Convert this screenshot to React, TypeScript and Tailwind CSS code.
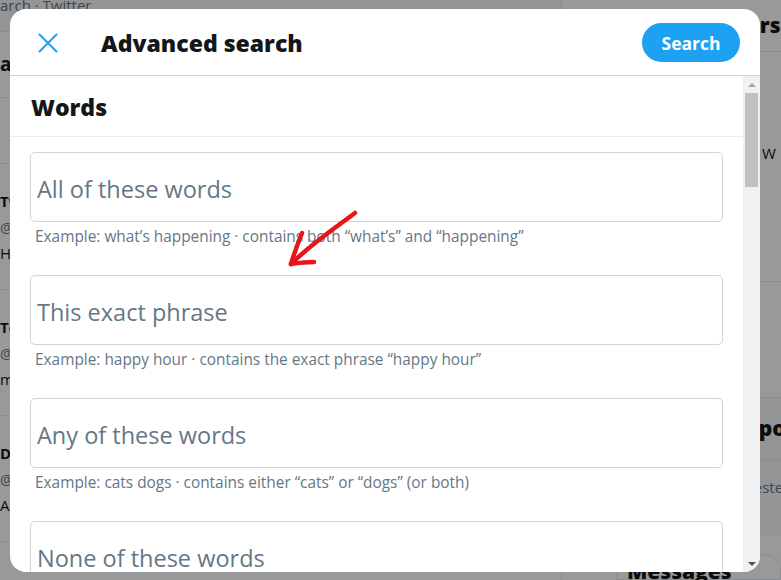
const fields = [
  {
    label: 'All of these words',
    help: 'Example: what’s happening · contains both “what’s” and “happening”',
  },
  {
    label: 'This exact phrase',
    help: 'Example: happy hour · contains the exact phrase “happy hour”',
  },
  {
    label: 'Any of these words',
    help: 'Example: cats dogs · contains either “cats” or “dogs” (or both)',
  },
  {
    label: 'None of these words',
    help: 'Example: cats dogs · does not contain “cats” and does not contain “dogs”',
  },
];

const tweets = [
  { name: 'Twitter Support', handle: '@Support · 2h', text: 'Here are some tips' },
  { name: 'Todo el mundo', handle: '@todo · 5h', text: 'me encanta 2020' },
  { name: 'Developer News', handle: '@devnews · 1d', text: 'Advanced filters' },
];

// pagina de fondo atenuada detras del modal
const BackgroundPage = () => (
  <div className="flex h-full w-full bg-white text-[#14171a]">
    <div className="w-[562px] shrink-0 border-r border-[#e6ecf0] flex flex-col">
      <div className="h-[32px] bg-[#f5f8fa] border-b border-[#e6ecf0] text-[15px] leading-[14px] text-[#657786] overflow-hidden">
        <span className="-mt-[2px] block">arch · Twitter</span>
      </div>
      <div className="h-[66px] border-b border-[#e6ecf0] flex items-center text-[19px] font-bold">
        <span>a</span>
      </div>
      <div className="h-[66px] border-b border-[#e6ecf0]" />
      {tweets.map((t) => (
        <div key={t.name} className="h-[126px] border-b border-[#e6ecf0] pt-[24px] text-[15px] leading-[26px]">
          <div className="font-bold">{t.name}</div>
          <div className="text-[#657786]">{t.handle}</div>
          <div>{t.text}</div>
        </div>
      ))}
    </div>
    <div className="flex-1 min-w-0 pl-[34px] flex flex-col whitespace-nowrap">
      <div className="h-[52px] border-b border-[#e6ecf0] flex items-center text-[21px] font-extrabold">
        <span className="ml-[40px]">Search filters</span>
      </div>
      <div className="h-[230px] border-b border-[#e6ecf0] pt-[90px] pl-[166px] text-[15px]">W</div>
      <div className="h-[116px] border-b border-[#e6ecf0]" />
      <div className="h-[62px] bg-[#f5f8fa] border-b border-[#e6ecf0] flex items-center text-[21px] font-extrabold">
        <span className="ml-[118px]">Top posts</span>
      </div>
      <div className="h-[75px] bg-[#f5f8fa] pt-[14px] pl-[124px] text-[15px] leading-[26px]">
        <div className="text-[#657786]">Suggested</div>
        <div className="font-bold">Tcon</div>
      </div>
      <div className="mt-auto ml-[20px] h-[26px] rounded-t-2xl bg-white border border-[#e6ecf0] pl-[10px] pt-[4px] text-[21px] font-extrabold leading-[24px]">
        Messages
      </div>
    </div>
  </div>
);

export default function App() {
  return (
    <div className="relative w-[781px] h-[580px] overflow-hidden font-['Open_Sans',sans-serif]">
      <BackgroundPage />
      <div className="absolute inset-0 bg-black/40" />

      <div className="absolute left-[10px] top-[9px] w-[750px] h-[563px] bg-white rounded-2xl overflow-hidden flex flex-col">
        {/* cabecera */}
        <div className="h-[67px] shrink-0 border-b border-[#ccd6dd] flex items-center pl-[28px] pr-[20px]">
          <button className="w-[20px] h-[20px] flex items-center justify-center mt-[2px]">
            <svg width="20" height="20" viewBox="0 0 20 20" fill="none" stroke="#1da1f2" strokeWidth="2" strokeLinecap="round">
              <path d="M1.5 1.5 L18.5 18.5" />
              <path d="M18.5 1.5 L1.5 18.5" />
            </svg>
          </button>
          <h1 className="ml-[43px] mt-[2px] text-[23px] font-extrabold text-[#14171a]">Advanced search</h1>
          <button className="ml-auto h-[39px] w-[98px] rounded-full bg-[#1da1f2] text-white text-[17.5px] font-bold pt-[2px]">
            Search
          </button>
        </div>

        <div className="flex flex-1 min-h-0">
          <div className="flex-1 overflow-hidden">
            <div className="h-[61px] border-b border-[#e6ecf0] flex items-center px-[21px]">
              <h2 className="mt-[2px] text-[23px] font-extrabold text-[#14171a]">Words</h2>
            </div>
            <div className="px-[20px] pt-[15px]">
              {fields.map((f) => (
                <div key={f.label} className="mb-[28px]">
                  <input
                    placeholder={f.label}
                    className="w-full h-[70px] border border-[#ccd6dd] rounded-[5px] pl-[6px] pt-[3px] text-[23.5px] outline-none placeholder:text-[#657786]"
                  />
                  <p className="pt-[5px] pl-[5px] text-[15.4px] leading-[20px] text-[#657786] whitespace-nowrap">{f.help}</p>
                </div>
              ))}
            </div>
          </div>

          {/* barra de desplazamiento */}
          <div className="w-[17px] shrink-0 bg-[#f1f1f1] flex flex-col items-center">
            <div className="h-[17px] flex items-center justify-center">
              <div className="w-0 h-0 border-l-[4px] border-r-[4px] border-b-[4px] border-l-transparent border-r-transparent border-b-[#a3a3a3]" />
            </div>
            <div className="w-[13px] h-[94px] bg-[#c1c1c1]" />
            <div className="mt-auto h-[17px] flex items-center justify-center">
              <div className="w-0 h-0 border-l-[4px] border-r-[4px] border-t-[4px] border-l-transparent border-r-transparent border-t-[#505050]" />
            </div>
          </div>
        </div>
      </div>

      {/* flecha roja de anotacion */}
      <svg className="absolute inset-0 pointer-events-none" width="781" height="580" viewBox="0 0 781 580">
        <g fill="none" stroke="#e8161b" strokeLinecap="round" strokeLinejoin="round" strokeWidth="4.5">
          <path d="M355 213 C 335 228, 310 245, 291 264" />
          <path d="M291 264 C 294 254, 298 243, 302 233" />
          <path d="M291 264 C 298 263, 306 262, 314 262" />
        </g>
      </svg>
    </div>
  );
}
